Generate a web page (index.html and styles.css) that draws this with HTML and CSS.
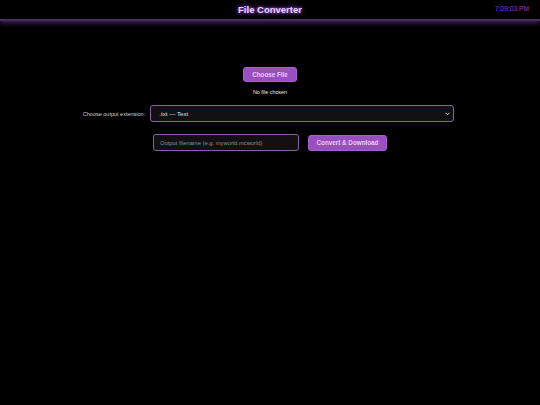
FILE: index.html
```html
<!DOCTYPE html>
<html lang="en">
<head>
<meta charset="utf-8">
<title>File Converter</title>
<link rel="stylesheet" href="styles.css">
</head>
<body>
<header class="topbar">
  <h1 class="title">File Converter</h1>
  <span class="clock">7:09:03 PM</span>
</header>
<main class="panel">
  <div class="file-pick">
    <button class="btn btn-choose" type="button">Choose File</button>
    <span class="file-status">No file chosen</span>
  </div>
  <div class="ext-row">
    <label class="ext-label" for="ext">Choose output extension:</label>
    <div class="select-wrap">
      <select class="ext-select" id="ext">
        <option>.txt — Text</option>
      </select>
      <svg class="chev" width="5" height="4" viewBox="0 0 10 8" aria-hidden="true">
        <path d="M1.5 2 L5 5.5 L8.5 2" fill="none" stroke="#d8d8d8" stroke-width="1.8" stroke-linecap="round" stroke-linejoin="round"/>
      </svg>
    </div>
  </div>
  <div class="out-row">
    <input class="out-name" type="text" placeholder="Output filename (e.g. myworld.mcworld)">
    <button class="btn btn-convert" type="button">Convert &amp; Download</button>
  </div>
</main>
</body>
</html>
```
FILE: styles.css
```css
html, body {
  margin: 0;
  padding: 0;
  background: #000;
  color: #ddd;
  font-family: "Liberation Sans", Arial, sans-serif;
  color-scheme: dark;
}
.topbar {
  position: relative;
  height: 19px;
  display: flex;
  align-items: center;
  justify-content: center;
  border-bottom: 2px solid #4b2b5e;
  box-shadow: 0 2px 5px rgba(150, 70, 200, 0.45);
}
.title {
  margin: 0;
  font-size: 9.5px;
  font-weight: bold;
  color: #e6d2ff;
  text-shadow: 0 0 3px #b36bff, 0 0 6px #8a3ccc;
}
.clock {
  position: absolute;
  right: 11px;
  top: 5px;
  font-size: 6.7px;
  color: #9a2fe6;
}
.panel {
  display: flex;
  flex-direction: column;
  align-items: center;
  padding-top: 46px;
}
.file-pick {
  display: flex;
  flex-direction: column;
  align-items: center;
  gap: 7px;
}
.btn {
  font-family: "Liberation Sans", Arial, sans-serif;
  font-weight: bold;
  font-size: 6.3px;
  color: #e8cdf5;
  background: #9a4fc0;
  border: 1px solid #a860cc;
  border-radius: 3px;
  cursor: pointer;
}
.btn-choose {
  width: 54px;
  height: 15px;
  padding: 0;
}
.file-status {
  font-size: 5.4px;
  color: #e8e8e8;
}
.ext-row {
  display: flex;
  align-items: center;
  gap: 5px;
  margin-top: 10px;
  margin-right: 3px;
}
.ext-label {
  font-size: 5.5px;
  color: #d0d0d0;
}
.select-wrap {
  position: relative;
  display: flex;
}
.ext-select {
  appearance: none;
  -webkit-appearance: none;
  box-sizing: border-box;
  width: 304px;
  height: 17px;
  padding: 0 0 0 8px;
  font-family: "Liberation Sans", Arial, sans-serif;
  font-size: 6.2px;
  color: #e0e0e0;
  background: #121012;
  border: 1px solid #8e5ca8;
  border-radius: 3px;
}
.chev {
  position: absolute;
  right: 4px;
  top: 6.5px;
  pointer-events: none;
}
.out-row {
  display: flex;
  align-items: center;
  gap: 9px;
  margin-top: 12px;
}
.out-name {
  box-sizing: border-box;
  width: 146px;
  height: 17px;
  padding: 0 6px;
  font-family: "Liberation Sans", Arial, sans-serif;
  font-size: 5.8px;
  color: #e0e0e0;
  background: #121012;
  border: 1px solid #8e5ca8;
  border-radius: 3px;
}
.out-name::placeholder {
  color: #909090;
}
.btn-convert {
  width: 79px;
  height: 16px;
  padding: 0;
}
```
